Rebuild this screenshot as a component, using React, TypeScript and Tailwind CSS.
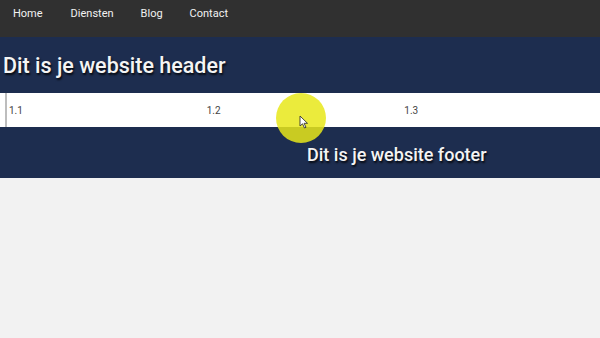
export default function App() {
  const font = { fontFamily: 'Roboto, "Liberation Sans", sans-serif' }
  return (
    <div className="relative h-[338px] w-[600px] overflow-hidden bg-[#f2f2f2]" style={font}>
      <nav className="flex h-[37px] items-start bg-[#303030] pt-[6px] text-[11px] text-[#f2f2f2]">
        <a className="ml-[13px]">Home</a>
        <a className="ml-[28px]">Diensten</a>
        <a className="ml-[27px]">Blog</a>
        <a className="ml-[27px]">Contact</a>
      </nav>
      <header className="flex h-[56px] items-center bg-[#1d2d4f] pl-[3px] pt-[2px]">
        <h1 className="text-[21.5px] font-medium text-[#f4f4f4] [text-shadow:1px_2px_2px_rgba(0,0,0,0.8)]">
          Dit is je website header
        </h1>
      </header>
      <div className="flex h-[34px] bg-white pl-[5px]">
        <div className="grid flex-1 grid-cols-3 items-center border-l-2 border-[#bdbdbd] text-[10px] text-[#444]">
          <div className="pl-[2px]">1.1</div>
          <div className="pl-[2px]">1.2</div>
          <div className="pl-[2px]">1.3</div>
        </div>
      </div>
      <footer className="flex h-[51px] items-center bg-[#1d2d4f] pl-[307px] pt-[3px]">
        <p className="text-[18px] font-medium text-[#f4f4f4] [text-shadow:1px_2px_2px_rgba(0,0,0,0.8)]">
          Dit is je website footer
        </p>
      </footer>
      {/* cursor highlight */}
      <div className="absolute left-[276px] top-[93px] h-[50px] w-[50px] rounded-full bg-[#e8e81a]/85" />
      <svg className="absolute left-[299px] top-[115px]" width="10" height="14" viewBox="0 0 10 14">
        <path d="M1 1 L1 11 L3.5 8.8 L5.5 13 L7 12.3 L5.1 8.3 L8.5 8.3 Z" fill="#fff" stroke="#333" strokeWidth="0.9" strokeLinejoin="round" />
      </svg>
    </div>
  )
}
